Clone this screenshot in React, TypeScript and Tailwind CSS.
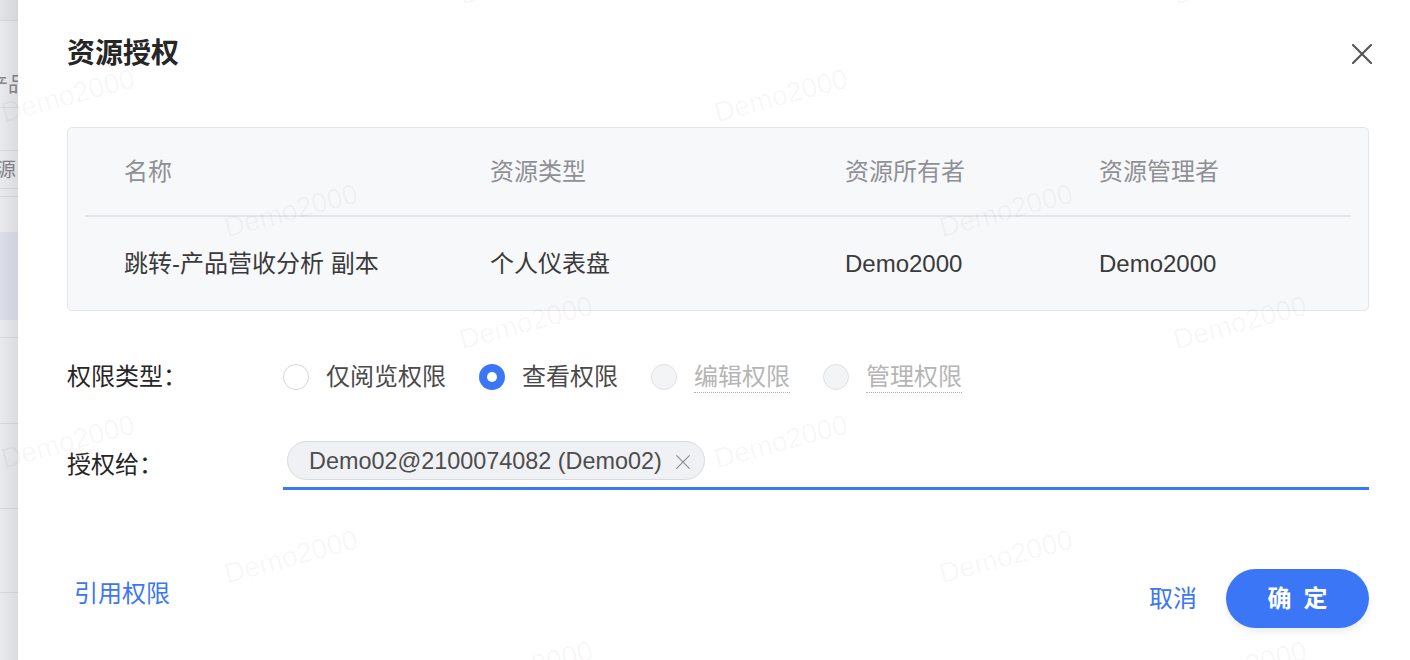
const marks: [number, number][] = [
  [526, -22], [1240, -22],
  [68, 96], [781, 96],
  [291, 211], [1006, 211],
  [526, 323], [1240, 323],
  [68, 442], [781, 442],
  [291, 557], [1006, 557],
  [526, 668], [1240, 668],
];

const columns = ['名称', '资源类型', '资源所有者', '资源管理者'];
const row = ['跳转-产品营收分析 副本', '个人仪表盘', 'Demo2000', 'Demo2000'];

function Cross({ size, width, className }: { size: number; width: number; className?: string }) {
  return (
    <svg width={size} height={size} viewBox="0 0 20 20" className={className} fill="none">
      <path d="M1 1L19 19M19 1L1 19" stroke="currentColor" strokeWidth={width} strokeLinecap="round" />
    </svg>
  );
}

function Backdrop() {
  return (
    <div className="relative w-[18px] shrink-0 overflow-hidden bg-[#e9eaee] text-[#85868b]">
      <div className="h-[21px] border-b border-[#d7d8dd] bg-[#e3e4e8]" />
      <div className="flex h-[87px] items-end border-b border-[#dadbe0] pb-[11px]">
        <span className="-ml-[12px] whitespace-nowrap text-[20px] leading-[22px]">产品</span>
      </div>
      <div className="h-[43px] border-b border-[#d7d8dd]" />
      <div className="flex h-[38px] items-center border-b border-[#d7d8dd]">
        <span className="-ml-[4px] whitespace-nowrap text-[20px] leading-[22px]">源</span>
      </div>
      <div className="h-[8px] border-b border-[#d7d8dd]" />
      <div className="h-[35px]" />
      <div className="h-[88px] bg-[#dcdfea]" />
      <div className="h-[18px] border-b border-[#d7d8dd]" />
      <div className="h-[86px] border-b border-[#d7d8dd]" />
      <div className="h-[85px] border-b border-[#d7d8dd]" />
      <div className="h-[84px] border-b border-[#d7d8dd]" />
      <div className="pointer-events-none absolute inset-0 bg-gradient-to-r from-transparent to-[#00000010]" />
    </div>
  );
}

function Radio({ label, checked, disabled }: { label: string; checked?: boolean; disabled?: boolean }) {
  return (
    <label className="flex items-center gap-[17px]">
      {checked ? (
        <span className="flex h-[26px] w-[26px] items-center justify-center rounded-full bg-[#3b76f6]">
          <span className="h-[10px] w-[10px] rounded-full bg-white" />
        </span>
      ) : (
        <span
          className={
            disabled
              ? 'h-[26px] w-[26px] rounded-full border border-[#dfe0e4] bg-[#f3f4f6]'
              : 'h-[26px] w-[26px] rounded-full border border-[#d6d7dc] bg-white'
          }
        />
      )}
      <span
        className={
          disabled
            ? 'border-b border-dotted border-[#b0b0b0] text-[24px] leading-[30px] text-[#b5b5b5]'
            : 'text-[24px] leading-[30px] text-[#4a4a4a]'
        }
      >
        {label}
      </span>
    </label>
  );
}

export default function App() {
  return (
    <div className="relative flex h-[660px] w-[1410px] overflow-hidden bg-white font-['Liberation_Sans','Noto_Sans_CJK_SC',sans-serif]">
      <Backdrop />

      <div className="flex flex-1 flex-col bg-white pl-[49px] pr-[41px] pt-[34px] shadow-[-3px_0_8px_rgba(0,0,0,0.06)]">
        {/* header */}
        <div className="flex h-[40px] items-center justify-between">
          <h2 className="text-[28px] font-bold leading-[40px] text-[#262626]">资源授权</h2>
          <button type="button" className="-mr-[3px] text-[#555]">
            <Cross size={20} width={2.1} />
          </button>
        </div>

        {/* resource table */}
        <div className="mt-[53px] rounded-[5px] border border-[#e4e5e9] bg-[#f7f8fa] px-[17px]">
          <div className="grid h-[89px] grid-cols-[366px_355px_254px_1fr] items-center border-b-2 border-[#e4e5e9]">
            {columns.map((c) => (
              <div key={c} className="pl-[39px] text-[24px] leading-[30px] text-[#8f9095]">
                {c}
              </div>
            ))}
          </div>
          <div className="grid h-[93px] grid-cols-[366px_355px_254px_1fr] items-center">
            {row.map((c, i) => (
              <div key={i} className="pl-[39px] text-[24px] leading-[30px] text-[#3a3a3a]">
                {c}
              </div>
            ))}
          </div>
        </div>

        {/* permission type */}
        <div className="mt-[46px] flex h-[40px] items-center">
          <div className="w-[216px] text-[24px] leading-[30px] text-[#262626]">权限类型：</div>
          <div className="flex items-center gap-[33px]">
            <Radio label="仅阅览权限" />
            <Radio label="查看权限" checked />
            <Radio label="编辑权限" disabled />
            <Radio label="管理权限" disabled />
          </div>
        </div>

        {/* grant to */}
        <div className="mt-[40px] flex">
          <div className="w-[216px] pt-[13px] text-[24px] leading-[30px] text-[#262626]">授权给：</div>
          <div className="flex h-[53px] flex-1 items-start border-b-[3px] border-[#3a78f6] pl-[4px] pt-[4px]">
            <span className="flex h-[39px] items-center gap-[14px] rounded-full border border-[#dadbe0] bg-[#f0f1f5] pl-[21px] pr-[14px]">
              <span className="text-[23.4px] leading-[30px] text-[#4d4d4d]">Demo02@2100074082 (Demo02)</span>
              <Cross size={14} width={1.6} className="mt-[3px] text-[#8c8c8c]" />
            </span>
          </div>
        </div>

        {/* footer */}
        <div className="mt-[79px] flex items-center justify-between">
          <button type="button" className="-mt-[9px] px-[7px] text-[24px] leading-[30px] text-[#3b76f6]">
            引用权限
          </button>
          <div className="flex items-center gap-[29px]">
            <button type="button" className="text-[24px] leading-[30px] text-[#3b76f6]">
              取消
            </button>
            <button
              type="button"
              className="flex h-[59px] w-[143px] items-center justify-center rounded-full bg-[#3b76f6] text-[24px] font-semibold leading-[30px] text-white shadow-[0_4px_6px_rgba(0,0,0,0.07)]"
            >
              <span className="-mr-[12px] tracking-[12px]">确定</span>
            </button>
          </div>
        </div>
      </div>

      {/* watermark layer */}
      <div className="pointer-events-none absolute inset-0">
        {marks.map(([x, y], i) => (
          <span
            key={i}
            className="absolute -translate-x-1/2 -translate-y-1/2 -rotate-[15deg] whitespace-nowrap text-[28px] leading-none text-[#0000000a]"
            style={{ left: x, top: y }}
          >
            Demo2000
          </span>
        ))}
      </div>
    </div>
  );
}
